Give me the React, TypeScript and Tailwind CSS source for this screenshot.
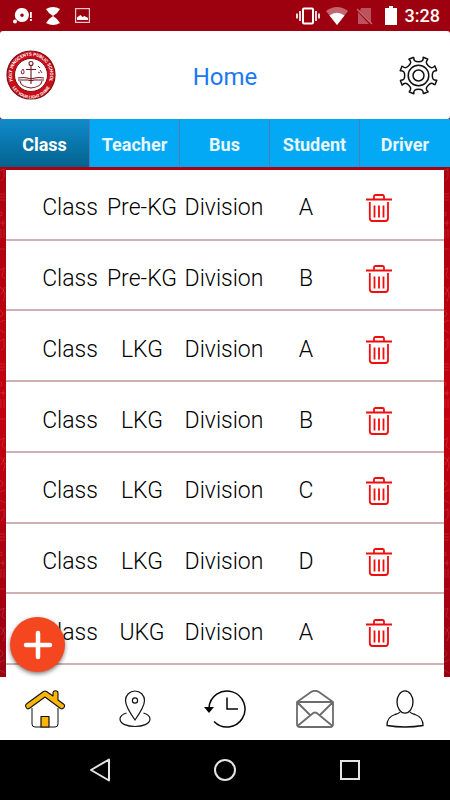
import React from "react";

const tabs = ["Class", "Teacher", "Bus", "Student", "Driver"];

const rows = [
  { grade: "Pre-KG", division: "A" },
  { grade: "Pre-KG", division: "B" },
  { grade: "LKG", division: "A" },
  { grade: "LKG", division: "B" },
  { grade: "LKG", division: "C" },
  { grade: "LKG", division: "D" },
  { grade: "UKG", division: "A" },
];

function StatusBar() {
  return (
    <div className="flex h-[31px] shrink-0 items-center justify-between pr-[10px] pl-3 text-white">
      <div className="flex items-center">
        <svg width="21" height="18" viewBox="0 0 21 18" fill="currentColor">
          <path fillRule="evenodd" d="M10 1a7 7 0 1 1-5 12a7 7 0 0 1 5-12ZM10 6.500a1.800 1.800 0 1 0 0 3.600a1.800 1.800 0 0 0 0-3.600Z" />
          <circle cx="3" cy="14.500" r="2" />
          <path d="M18 5h1.800v6H18zM18 12h1.800v2H18z" />
        </svg>
        <svg className="ml-3" width="16" height="20" viewBox="0 0 16 20" fill="currentColor">
          <path d="M1 3Q8-1 15 3Q13 7 8 10Q3 7 1 3ZM8 10Q13 13 15 17Q8 21 1 17Q3 13 8 10Z" />
        </svg>
        <svg className="ml-[14px]" width="15" height="15" viewBox="0 0 15 15">
          <rect x=".6" y=".6" width="13.800" height="13.800" fill="none" stroke="#f0c8cc" strokeWidth="1.200" />
          <path fill="white" d="M2 12V9.500l2-1.500 1.500-1 2 2 2-1L13 10v2Z" />
        </svg>
      </div>
      <div className="flex items-center">
        <svg width="24" height="18" viewBox="0 0 24 18" fill="none" stroke="currentColor">
          <rect x="7" y="1.500" width="10" height="15" rx="1" strokeWidth="2" />
          <path d="M4 4v10M20 4v10M1 6.500v5M23 6.500v5" strokeWidth="1.700" />
        </svg>
        <svg className="ml-[6px]" width="22" height="18" viewBox="0 0 22 18" fill="currentColor">
          <path opacity=".4" d="M0 4Q11-4 22 4L11 18Z" />
          <path d="M3.500 8.500Q11 3 18.500 8.500L11 18Z" />
        </svg>
        <svg className="ml-2" width="17" height="18" viewBox="0 0 17 18">
          <path fill="#fff" opacity=".32" d="M5 1h10v14L4 4ZM2 5l11 12H2Z" />
          <path stroke="#fff" opacity=".4" strokeWidth="1.500" d="M1 2l15 15" />
        </svg>
        <svg className="ml-3" width="12" height="19" viewBox="0 0 12 19" fill="currentColor">
          <path d="M4 0h4v2h4v17H0V2h4z" />
        </svg>
        <span className="ml-2 pt-[1px] text-[18px] leading-none font-medium">3:28</span>
      </div>
    </div>
  );
}

function SchoolLogo() {
  return (
    <svg width="50" height="50" viewBox="0 0 50 50" role="img" aria-label="Holy Innocents Public School">
      <defs>
        <path id="logo-top" d="M10.300 37.300A19.200 19.200 0 1 1 39.700 37.300" />
        <path id="logo-bottom" d="M3.500 27A21.500 21.500 0 0 0 46.500 27" />
      </defs>
      <circle cx="25" cy="25" r="24" fill="#cb0d17" stroke="#801018" strokeWidth="1.200" />
      <circle cx="25" cy="25" r="16.500" fill="#fff" stroke="#801018" strokeWidth="1" />
      <g fill="#fff" fontWeight="700" textAnchor="middle">
        <text fontSize="4.500"><textPath href="#logo-top" startOffset="50%">HOLY INNOCENTS PUBLIC SCHOOL</textPath></text>
        <text fontSize="4.200"><textPath href="#logo-bottom" startOffset="50%">LET YOUR LIGHT SHINE</textPath></text>
      </g>
      <g fill="none" stroke="#711820" strokeWidth="1.100">
        <circle cx="25" cy="13.500" r="2" />
        <path d="M25 15v19M20 19.500h10M12 28q7-1.500 13 1q6-2.500 13-1M12 30h10l3 1 3-1h10M14 31q1 6 11 7q10-1 11-7" />
        <path d="M17 19q-3 3-1 5q3 0 2-3zM32 16l2 2M34 20l2 3M32 22l2 1" strokeWidth=".9" />
      </g>
    </svg>
  );
}

function GearIcon() {
  const teeth = [0, 45, 90, 135, 180, 225, 270, 315];
  return (
    <svg width="39" height="39" viewBox="-19.5 -19.5 39 39" fill="none" stroke="#111" strokeWidth="1.500" strokeLinejoin="round">
      {teeth.map((angle) => (
        <path key={angle} transform={`rotate(${angle})`} d="M-4.700-18.300C-5-15-3.500-13.800 0-13.800S5-15 4.700-18.300L9.600-16.300" />
      ))}
      <circle r="10.300" />
      <circle r="5.500" />
    </svg>
  );
}

function TrashIcon() {
  return (
    <svg width="26" height="28" viewBox="0 0 26 28" fill="none" stroke="#f20d0d" strokeWidth="1.800">
      <path d="M0 5.500h26M8 5V2.500Q8 1 9.500 1h7Q18 1 18 2.500V5M3.800 8v16Q3.800 27 6.500 27h13Q22 27 22 24V8M8.500 11.500v12M13 11.500v12M17.500 11.500v12" />
    </svg>
  );
}

function HomeIcon() {
  return (
    <svg width="40" height="38" viewBox="0 0 40 38" stroke="#111" strokeLinejoin="round">
      <path d="M7 18v16q0 3 3 3h20q3 0 3-3V18" fill="none" strokeWidth="1" />
      <path d="M1.500 18Q-.5 15 2 13.500L18.500 1.500Q20 .5 21.500 1.500L28 6V3q0-2.300 2.500-2.300T33 3v7l5.500 4q2 1.500.5 3.500t-3.500 1L20 7 4.500 18.200q-2 1.300-3-.2Z" fill="#fbb507" strokeWidth="1.100" />
      <path d="M16 37V26.500h8V37Z" fill="#fbb507" strokeWidth="1.200" />
    </svg>
  );
}

function PinIcon() {
  return (
    <svg width="32" height="38" viewBox="0 0 32 38" fill="none" stroke="#111" strokeWidth="1.200">
      <path d="M16 30Q6.500 16.500 6.500 10.500a9.500 9.500 0 0 1 19 0Q25.500 16.500 16 30Z" />
      <circle cx="16" cy="10.500" r="2.600" />
      <path d="M7.500 23Q1 25 1 29c0 10 30 10 30 0q0-4-6.500-6" />
    </svg>
  );
}

function HistoryIcon() {
  return (
    <svg width="42" height="38" viewBox="0 0 42 38" fill="none" stroke="#050505" strokeWidth="1.500">
      <path d="M5 18A18 18 0 1 1 10 31.500M23 7.500V19h11" />
      <path d="M0 17h10l-5 6Z" fill="#050505" stroke="none" />
    </svg>
  );
}

function MailIcon() {
  return (
    <svg width="38" height="38" viewBox="0 0 38 38" fill="none" stroke="#6c6c6c" strokeWidth="1.800" strokeLinejoin="round">
      <path d="M1 12L15 2q4-2.500 8 0l14 10v22q0 3-3 3H4q-3 0-3-3ZM1 12h36L24 25M1 12l13 13M1.500 36L16 24q3-3 6 0l14.500 12" />
    </svg>
  );
}

function PersonIcon() {
  return (
    <svg width="38" height="38" viewBox="0 0 38 38" fill="none" stroke="#111" strokeWidth="1.300">
      <ellipse cx="19" cy="12" rx="8" ry="11.200" />
      <path d="M14 22Q13 23.500 9 24.500Q1 27 1 35.500q18 3 36 0Q37 27 29 24.500Q25 23.500 24 22" />
    </svg>
  );
}

function Doodles() {
  return (
    <svg className="absolute inset-0" width="100%" height="100%" aria-hidden="true">
      <defs>
        <pattern id="doodles" width="444" height="170" patternUnits="userSpaceOnUse">
          <path
            d="M0 4l4-2v8l-3 4M0 27h5M0 30h5M0 33h5M0 45a2 2 0 1 1 0 4M0 56h5M3 53v6M1 62v9M4 62v9M0 82h5M0 103l4-2-2 8 3 3M0 120q8 5 3 14M5 120l-4 8M0 143q6 4 0 7M0 155l5-2M0 163l5 3"
            fill="none"
            stroke="#ffb0b0"
            strokeOpacity=".18"
          />
        </pattern>
      </defs>
      <rect width="100%" height="100%" fill="url(#doodles)" />
    </svg>
  );
}

const navItems = [
  { label: "Home", icon: <HomeIcon /> },
  { label: "Location", icon: <PinIcon /> },
  { label: "History", icon: <HistoryIcon /> },
  { label: "Messages", icon: <MailIcon /> },
  { label: "Profile", icon: <PersonIcon /> },
];

export default function App() {
  return (
    <div className="flex min-h-screen flex-col bg-[#9d000e] font-['Roboto',sans-serif]">
      <StatusBar />
      <header className="grid h-[88px] shrink-0 grid-cols-[1fr_auto_1fr] items-center rounded-[3px] bg-white px-[6px]">
        <SchoolLogo />
        <h1 className="pt-1 text-[24px] leading-8 text-[#1a78f5]">Home</h1>
        <button className="justify-self-end pr-[6px]" aria-label="Settings"><GearIcon /></button>
      </header>
      <nav className="grid h-12 shrink-0 grid-cols-5 divide-x divide-[#5278b8] bg-[#04a9f5]">
        {tabs.map((tab, index) => (
          <button
            key={tab}
            className={`pt-[2px] text-[18px] font-bold ${index === 0 ? "bg-linear-to-b from-[#108ccb] to-[#04628f] text-white" : "text-[#e9f6ff]"}`}
          >
            {tab}
          </button>
        ))}
      </nav>
      <main className="relative flex flex-1 flex-col bg-linear-to-b from-[#ac000e] via-[#c4000f] to-[#980010] px-[6px] pt-[3px]">
        <Doodles />
        <ul className="relative flex flex-1 flex-col bg-white pb-3">
          {rows.map((row, index) => (
            <li
              key={index}
              className="grid min-h-16 flex-1 grid-cols-[72px_72px_92px_72px_74px] items-center justify-center border-b-2 border-[#d0b0b2] pt-2 text-center text-[23px] leading-7 font-light text-black"
            >
              <span>Class</span>
              <span>{row.grade}</span>
              <span>Division</span>
              <span>{row.division}</span>
              <button className="justify-self-center" aria-label={`Delete class ${row.grade} ${row.division}`}>
                <TrashIcon />
              </button>
            </li>
          ))}
        </ul>
        <button
          aria-label="Add class"
          className="absolute bottom-[5px] left-[10px] flex size-[55px] items-center justify-center rounded-full bg-[#f4461f] shadow-[0_2px_4px_rgba(0,0,0,0.5)]"
        >
          <svg width="30" height="30" viewBox="0 0 30 30" stroke="#fff" strokeWidth="4.500" strokeLinecap="round">
            <path d="M15 3v24M3 15h24" />
          </svg>
        </button>
      </main>
      <nav className="grid h-[63px] shrink-0 grid-cols-5 bg-white">
        {navItems.map((item) => (
          <button key={item.label} aria-label={item.label} className="flex items-center justify-center">
            {item.icon}
          </button>
        ))}
      </nav>
      <div className="flex h-[60px] shrink-0 items-center justify-center gap-[103px] bg-black">
        <button aria-label="Back">
          <svg width="22" height="24" viewBox="0 0 22 24" fill="none" stroke="#e4e4e4" strokeWidth="2" strokeLinejoin="round">
            <path d="M20 1.500v21L2 12Z" />
          </svg>
        </button>
        <button aria-label="Home screen">
          <svg width="22" height="22" viewBox="0 0 22 22" fill="none" stroke="#e4e4e4" strokeWidth="2">
            <circle cx="11" cy="11" r="10" />
          </svg>
        </button>
        <button aria-label="Recent apps">
          <svg width="22" height="22" viewBox="0 0 22 22" fill="none" stroke="#e4e4e4" strokeWidth="2">
            <rect x="2" y="2" width="18" height="18" />
          </svg>
        </button>
      </div>
    </div>
  );
}
